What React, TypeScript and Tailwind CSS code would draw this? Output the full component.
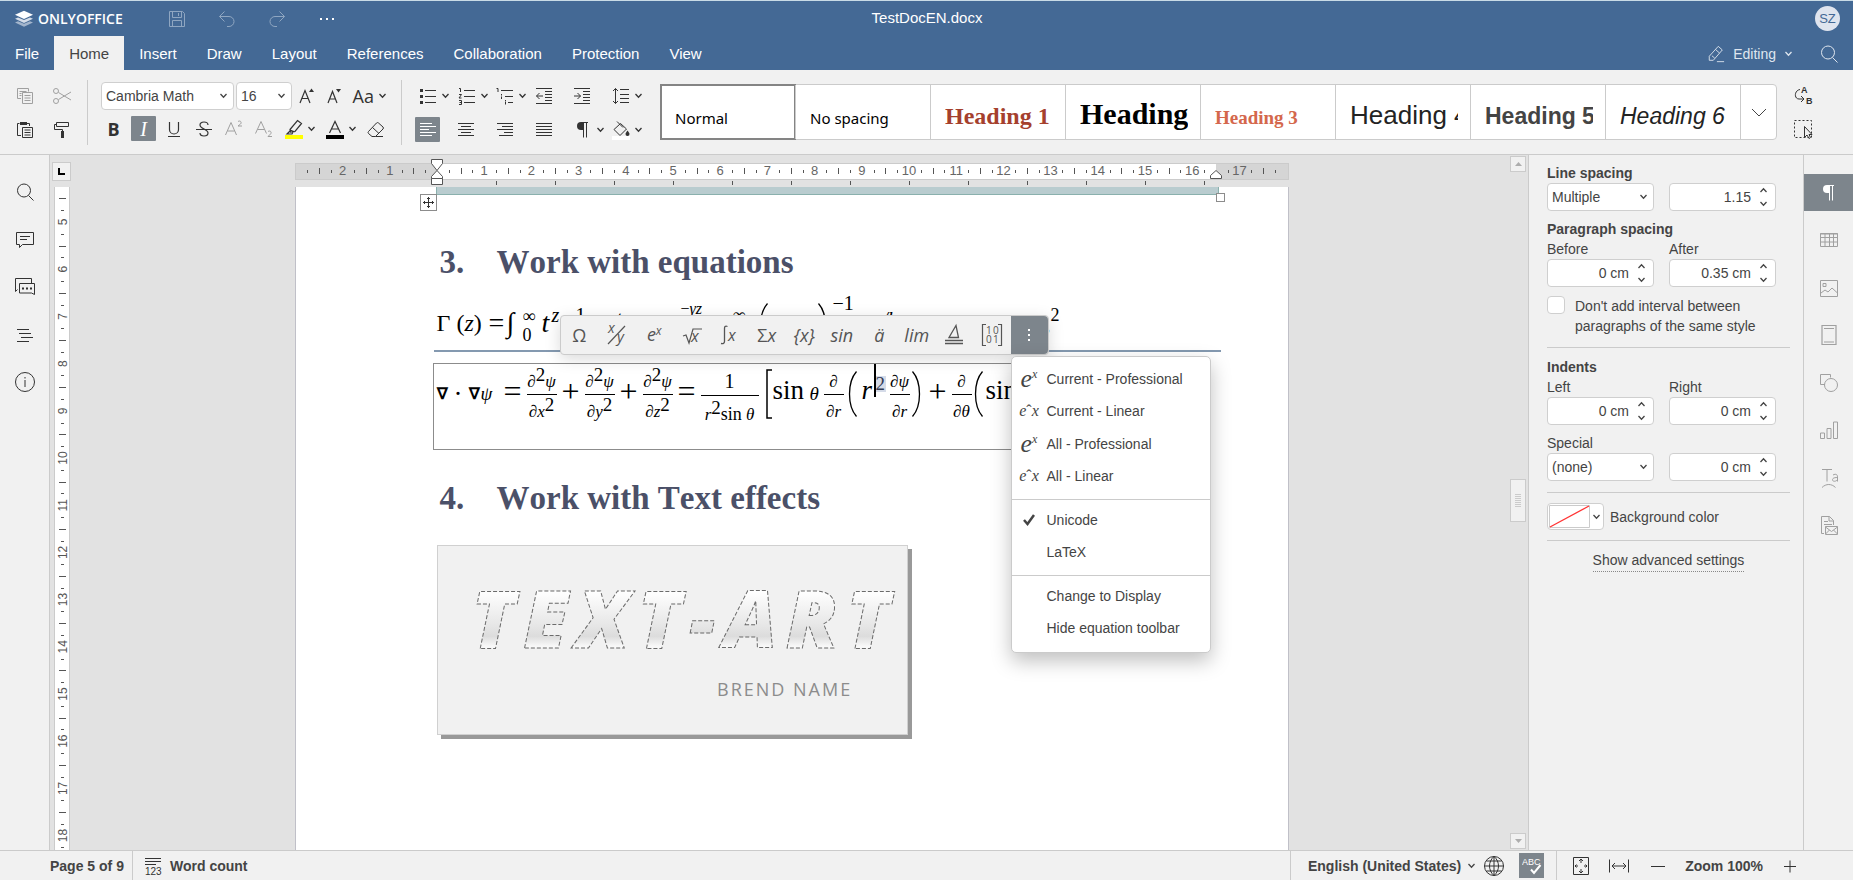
import React, { useState } from 'react';
import clsx from 'clsx';

type IconProps = { children: React.ReactNode; size?: number; className?: string };

const Icon = ({ children, size = 20, className }: IconProps) => (
  <svg width={size} height={size} viewBox="0 0 20 20" fill="none" stroke="currentColor" className={clsx('shrink-0', className)} aria-hidden="true">
    {children}
  </svg>
);

const Chevron = ({ className }: { className?: string }) => (
  <svg width="9" height="6" viewBox="0 0 9 6" fill="none" stroke="currentColor" strokeWidth="1.3" className={clsx('shrink-0', className)} aria-hidden="true">
    <path d="M1.5 1l3 3.2 3-3.2" />
  </svg>
);

/* ---------- icons ---------- */

const icons = {
  save: <path d="M2.5 2.5h13l2 2v13h-15zM5.5 2.5v6h9v-6M11.5 4v3M5.5 17.5v-6h9v6" />,
  undo: <path d="M7.5 2.5l-5 5 5 5M2.5 7.5H12a5 5 0 0 1 0 10h-2" />,
  redo: <path d="M12.5 2.5l5 5-5 5M17.5 7.5H8a5 5 0 0 0 0 10h2" />,
  copy: <path d="M6 12.5H2.5v-10h11v3M4.5 5.5h7M4.5 7.5h2M4.5 9.5h2M7.5 6.5h10v11h-10zM9.5 9.5h6M9.5 12h6M9.5 14.5h6" />,
  cut: <path d="M6.5 6.5L19 14M6.5 13.5L19 6M1.5 5a2.5 2.5 0 1 0 5 0 2.5 2.5 0 1 0-5 0M1.5 15a2.5 2.5 0 1 0 5 0 2.5 2.5 0 1 0-5 0" />,
  paste: (
    <>
      <path d="M6 15.5H2.5v-12h2M12 3.5h2.5V6M7.5 7.5h10v10h-10zM9.5 10h6M9.5 12.5h6M9.5 15h6" />
      <path d="M5 2h7v3H5z" fill="currentColor" stroke="none" />
    </>
  ),
  painter: (
    <>
      <path d="M4.5 2.5h12v4h-12zM4.5 4.5h-2v5h8v2" />
      <path d="M9 11h3v7H9z" fill="currentColor" stroke="none" />
    </>
  ),
  fontUp: (
    <>
      <path d="M3 17L8 4.5 13 17M5 12.5h6" strokeWidth="1.2" />
      <path d="M12 6l2.5-3.5L17 6z" fill="currentColor" stroke="none" />
    </>
  ),
  fontDown: (
    <>
      <path d="M4 17L8.5 5.5 13 17M5.5 13h6" strokeWidth="1.2" />
      <path d="M12 3l2.5 3.5L17 3z" fill="currentColor" stroke="none" />
    </>
  ),
  underline: <path d="M5.5 3v7.5a4.5 4.5 0 0 0 9 0V3M4 17.5h12" strokeWidth="1.2" />,
  strike: <path d="M14 6c0-2-1.8-3-4-3S6 4 6 6s2 3 4 4 4 2 4 4-1.8 3-4 3-4-1-4-3M2 10.5h16" strokeWidth="1.2" />,
  superscript: <path d="M1.5 16L7 3.5 12.5 16M3.5 12h7M14 2.5c2.5-1.5 4 1 2.5 2.5L14 7h4" />,
  subscript: <path d="M1.5 14.5L7 2.5l5.5 12M3.5 10.5h7M14 12.5c2.5-1.5 4 1 2.5 2.5L14 17.5h4" />,
  highlight: <path d="M13.5 1.5l4 3-6.5 8-4.5.5-.5-2.5zM6 11l5 2M6 12l-3 3h5l1-2" strokeWidth="1.2" />,
  fontColor: <path d="M4.5 14L10 2.5 15.5 14M6.5 10h7" strokeWidth="1.2" />,
  eraser: <path d="M2.5 12.5l8-8.5a1.5 1.5 0 0 1 2 0l4.5 4a1.5 1.5 0 0 1 0 2L9.5 17.5H6l-3.5-3a1.5 1.5 0 0 1 0-2zM6.5 8.5l6.5 6M9.5 17.5H17" />,
  bullets: (
    <>
      <path d="M7 4.5h11M7 10.5h11M7 16.5h11" />
      <path d="M2 3h3v3H2zM2 9h3v3H2zM2 15h3v3H2z" fill="currentColor" stroke="none" />
    </>
  ),
  numbers: <path d="M7 4.5h11M7 10.5h11M7 16.5h11M2 2.5h1.5V6M2 8.5h2.5L2 12h2.5M2 14.5h2.5v4H2M2.5 16.5h2" />,
  multi: <path d="M6 4.5h12M10 10.5h8M13 16.5h5M1.5 2.5H3V6M6.5 8v1.5M6.5 10.5V13M10.5 14v1.5M10.5 16v2.5" />,
  outdent: <path d="M2 2.5h16M11 5.5h7M11 8.5h7M11 11.5h7M11 14.5h7M2 17.5h16M2.5 10H9M5.5 7l-3 3 3 3" />,
  indent: <path d="M2 2.5h16M11 5.5h7M11 8.5h7M11 11.5h7M11 14.5h7M2 17.5h16M2 10h6.5M5.5 7l3 3-3 3" />,
  lineSpacing: <path d="M4.5 2.5v15M2 5l2.5-2.5L7 5M2 15l2.5 2.5L7 15M9 3.5h9M9 8.5h9M9 12.5h9M9 16.5h9" />,
  alignLeft: <path d="M2 3.5h12M2 6.5h16M2 9.5h9M2 12.5h16M2 15.5h12" />,
  alignCenter: <path d="M2 3.5h16M5 6.5h10M2 9.5h16M5 12.5h10M2 15.5h16" />,
  alignRight: <path d="M2 3.5h16M7 6.5h11M2 9.5h16M9 12.5h9M4 15.5h14" />,
  justify: <path d="M2 3.5h16M2 6.5h16M2 9.5h16M2 12.5h16M2 15.5h16" />,
  pilcrow: (
    <>
      <path d="M10.5 2.5v15M13.5 2.5v15M8 2.5h7" />
      <path d="M10.5 2H8a4 4 0 0 0 0 8h2.5z" fill="currentColor" stroke="none" />
    </>
  ),
  fill: (
    <>
      <path d="M3 9.5l6.5-6 6 5.5-6.5 6.5zM6 1.5l6 6" />
      <path d="M16.5 10.5c1 1.5 2 2.5 2 3.5a2 2 0 0 1-4 0c0-1 1-2 2-3.5z" fill="currentColor" stroke="none" />
    </>
  ),
  replace: (
    <>
      <path d="M7 4.5c-6 1-6 9.5-1 9.5h5M8 11l3 3-3 3" />
      <text x="8" y="8" fontSize="9" fontWeight="700" fontFamily="Liberation Sans, sans-serif" fill="currentColor" stroke="none">A</text>
      <text x="13" y="19" fontSize="9" fontWeight="700" fontFamily="Liberation Sans, sans-serif" fill="currentColor" stroke="none">B</text>
    </>
  ),
  selectAll: (
    <>
      <path d="M1.5 1.5h17v17h-17z" strokeDasharray="2 2" />
      <path d="M11.5 7.5v11l2.5-2.5 2 3.5 1.5-1-1.5-3h3z" fill="#f1f1f1" />
    </>
  ),
  pencil: <path d="M12.5 1.5l4.5 4-10 11.5H2.5v-4.5zM9.5 5l4.5 4M5.5 12l3 2.5M11 18.5h8" />,
  search: <path d="M2.5 8.5a6.5 6.5 0 1 0 13 0 6.5 6.5 0 1 0-13 0M13.5 13.5l5 5" />,
  comment: <path d="M1.5 3.5h17v12h-11l-3 3v-3h-3zM5 7.5h10M5 10.5h7" />,
  chat: (
    <>
      <path d="M16.5 6V1.5h-16v13l2-2M4.5 6.5h15v11l-3-1.5h-12z" />
      <path d="M7 10.5h2v2H7zM11 10.5h2v2h-2zM15 10.5h2v2h-2z" fill="currentColor" stroke="none" />
    </>
  ),
  headings: <path d="M2 4.5h12M4 8.5h12M6 12.5h12M2 16.5h12" />,
  info: <path d="M.5 10a9.5 9.5 0 1 0 19 0 9.5 9.5 0 1 0-19 0M10 8v7M10 5v1.5" />,
  table: <path d="M1 4h18M1.5 3.5h17v13h-17zM1.5 7.5h17M1.5 12h17M6 4v12.5M10.5 4v12.5M14.5 4v12.5" />,
  image: <path d="M1.5 2.5h17v16h-17zM4 5.5h3v3H4zM2 15l4-3 3 2 4-4 5.5 5" />,
  headerFooter: <path d="M3 .5h14v19H3zM5 3.5h10M5 17h10" strokeWidth="1.2" />,
  shapes: <path d="M6 11.5H1.5v-10h10v3M5.5 12a6.5 6.5 0 1 0 13 0 6.5 6.5 0 1 0-13 0" />,
  chart: <path d="M1.5 13h4v5.5h-4zM8 8.5h4v10H8zM14.5 2h4v16.5h-4z" />,
  textArt: <path d="M3 1.5h10M8 1.5v12M14 7c3-1.5 4.5-.5 4.5 2v4.5M18.5 9.5c-4 0-5 1-5 2.5s3.5 2 5-.5M3 19.5c4-4 9.5-4 13.5 0" />,
  mailMerge: <path d="M5 18.5H2.5v-17h8l4 4V10M10 1.5v4.5h4.5M5 6.5h4M5 9.5h8M6.5 11.5h12v8h-12zM6.5 12l6 4.5 6-4.5M6.5 19l4-4M18.5 19l-4-4" />,
  wordCount: (
    <>
      <path d="M2 2.5h16M2 5.5h16M2 8.5h11" />
      <text x="2" y="19" fontSize="10" fontWeight="400" fontFamily="Liberation Sans, sans-serif" fill="currentColor" stroke="none">123</text>
    </>
  ),
  globe: <path d="M.5 10a9.5 9.5 0 1 0 19 0 9.5 9.5 0 1 0-19 0M10 .5v19M.5 10h19M2.5 5h15M2.5 15h15M10 .5c-6 5-6 14 0 19M10 .5c6 5 6 14 0 19" />,
  spell: (
    <>
      <text x="0" y="9" fontSize="9" fontWeight="400" fontFamily="Liberation Sans, sans-serif" fill="currentColor" stroke="none">ABC</text>
      <path d="M9 13.5l3 3.5 6.5-8" strokeWidth="2" />
    </>
  ),
  fitPage: <path d="M2.5 1.5h15v17h-15zM10 3v4M8 5l2-2 2 2M10 13v4M8 15l2 2 2-2M4 10h3M5.5 8.5L4 10l1.5 1.5M13 10h3M14.5 8.5L16 10l-1.5 1.5" />,
  fitWidth: <path d="M.5 3.5v13M19.5 3.5v13M3 10h14M6 7l-3 3 3 3M14 7l3 3-3 3" />,
  minus: <path d="M3 10.5h14" />,
  plus: <path d="M4 10.5h12M10 4.5v12" />,
};

type IconName = keyof typeof icons;

/* ---------- toolbar parts ---------- */

const ToolButton = ({ icon, label, active, muted, children }: { icon?: IconName; label: string; active?: boolean; muted?: boolean; children?: React.ReactNode }) => (
  <button
    type="button"
    aria-label={label}
    aria-pressed={active}
    className={clsx(
      'flex h-[25px] w-[25px] shrink-0 items-center justify-center rounded-[1px]',
      active ? 'bg-[#7d858c] text-white' : muted ? 'text-[#a0a0a0]' : 'text-[#333]',
    )}
  >
    {icon && <Icon>{icons[icon]}</Icon>}
    {children}
  </button>
);

const SplitButton = ({ icon, label, swatch }: { icon: IconName; label: string; swatch?: string }) => (
  <button type="button" aria-label={label} className="flex h-[25px] w-[36px] shrink-0 items-center text-[#333]">
    <span className="flex w-[26px] flex-col items-center">
      <Icon>{icons[icon]}</Icon>
      {swatch && <span className={clsx('-mt-1 h-1 w-[18px]', swatch)} />}
    </span>
    <Chevron />
  </button>
);

const Separator = () => <div className="mx-[13px] mt-[10px] h-[65px] w-px shrink-0 bg-[#cbcbcb]" />;

const SelectBox = ({ label, value, className }: { label: string; value: string; className?: string }) => (
  <div className={clsx('relative shrink-0', className)}>
    <select aria-label={label} defaultValue={value} className="h-7 w-full appearance-none rounded-sm border border-[#cfcfcf] bg-white pl-1 text-sm text-[#444]">
      <option>{value}</option>
    </select>
    <Chevron className="pointer-events-none absolute top-[11px] right-[6px]" />
  </div>
);

const tabs = ['File', 'Home', 'Insert', 'Draw', 'Layout', 'References', 'Collaboration', 'Protection', 'View'];

const styles = [
  { name: 'Normal', cls: 'font-["Noto_Sans"] text-[15px] text-black' },
  { name: 'No spacing', cls: 'font-["Noto_Sans"] text-[15px] text-black' },
  { name: 'Heading 1', cls: 'font-["Liberation_Serif"] text-2xl font-bold text-[#a5402d]' },
  { name: 'Heading 2', cls: 'font-["Liberation_Serif"] text-[30px] font-bold text-black' },
  { name: 'Heading 3', cls: 'font-["Liberation_Serif"] text-[19px] font-bold text-[#d4674c]' },
  { name: 'Heading 4', cls: 'text-[26px] text-[#232323]' },
  { name: 'Heading 5', cls: 'text-[23px] font-bold text-[#444]' },
  { name: 'Heading 6', cls: 'text-[23px] italic text-[#232323]' },
];

const Header = () => {
  const [activeTab, setActiveTab] = useState('Home');
  return (
    <header className="border-t border-[#c9dbe6] bg-[#446995] text-white">
      <div className="grid h-[35px] grid-cols-[1fr_auto_1fr] items-center pr-[13px] pl-[14px]">
        <div className="flex items-center">
          <svg width="20" height="18" viewBox="0 0 20 18" aria-hidden="true">
            <path d="M1 12.5l3-1.3 6 2.6 6-2.6 3 1.3-9 4.3z" fill="#a3b5cc" />
            <path d="M1 8.7l3-1.3 6 2.7 6-2.7 3 1.3L10 13z" fill="#d5dde8" />
            <path d="M1 4.8L10 .7l9 4.1L10 9z" fill="#fff" />
          </svg>
          <span className="ml-1 font-['Open_Sans'] text-sm font-semibold">ONLYOFFICE</span>
          <div className="ml-11 flex gap-[30px] text-[#8fa6c1]">
            <button type="button" aria-label="Save"><Icon>{icons.save}</Icon></button>
            <button type="button" aria-label="Undo"><Icon>{icons.undo}</Icon></button>
            <button type="button" aria-label="Redo"><Icon>{icons.redo}</Icon></button>
            <button type="button" aria-label="More" className="ml-[3px] text-white">
              <svg width="14" height="4" viewBox="0 0 14 4" fill="currentColor"><path d="M0 1h2v2H0zM6 1h2v2H6zM12 1h2v2h-2z" /></svg>
            </button>
          </div>
        </div>
        <h1 className="text-[15px]">TestDocEN.docx</h1>
        <div className="flex justify-end">
          <span className="flex h-[25px] w-[25px] items-center justify-center rounded-full bg-[#dfe4ee] text-[13px] text-[#446995]">SZ</span>
        </div>
      </div>
      <div className="flex h-[34px] items-center justify-between pr-[14px]">
        <nav className="flex h-full">
          {tabs.map(tab => (
            <button
              key={tab}
              type="button"
              onClick={() => setActiveTab(tab)}
              className={clsx('h-full px-[15px] pt-[2px] text-[15px]', activeTab === tab && 'bg-[#f1f1f1] text-[#444]')}
            >
              {tab}
            </button>
          ))}
        </nav>
        <div className="flex items-center pt-px text-[#dfe6ef]">
          <button type="button" className="flex items-center gap-2 text-sm">
            <Icon size={18}>{icons.pencil}</Icon>
            Editing
            <Chevron />
          </button>
          <button type="button" aria-label="Search" className="ml-[26px]"><Icon>{icons.search}</Icon></button>
        </div>
      </div>
    </header>
  );
};

const Toolbar = () => (
  <div className="flex h-[85px] border-b border-[#cbcbcb] bg-[#f1f1f1] pl-3">
    <div className="grid grid-cols-2 content-start gap-x-3 gap-y-[9px] pt-[13px]">
      <ToolButton icon="copy" label="Copy" muted />
      <ToolButton icon="cut" label="Cut" muted />
      <ToolButton icon="paste" label="Paste" />
      <ToolButton icon="painter" label="Copy style" />
    </div>
    <Separator />
    <div className="flex flex-col gap-[6px] pt-3">
      <div className="flex h-7 items-center gap-[2px]">
        <SelectBox label="Font" value="Cambria Math" className="w-[133px]" />
        <SelectBox label="Font size" value="16" className="w-[56px]" />
        <ToolButton icon="fontUp" label="Increment font size" />
        <ToolButton icon="fontDown" label="Decrement font size" />
        <button type="button" aria-label="Change case" className="flex w-[39px] items-center justify-end gap-1 text-[#333]">
          <span className="font-['Open_Sans'] text-lg leading-none">Aa</span>
          <Chevron />
        </button>
      </div>
      <div className="flex gap-[5px]">
        <ToolButton label="Bold"><span className="font-['Open_Sans'] text-lg leading-none font-bold">B</span></ToolButton>
        <ToolButton label="Italic" active><span className="font-['Liberation_Serif'] text-xl leading-none italic">I</span></ToolButton>
        <ToolButton icon="underline" label="Underline" />
        <ToolButton icon="strike" label="Strikeout" />
        <ToolButton icon="superscript" label="Superscript" muted />
        <ToolButton icon="subscript" label="Subscript" muted />
        <SplitButton icon="highlight" label="Highlight color" swatch="bg-[#ff0]" />
        <SplitButton icon="fontColor" label="Font color" swatch="bg-black" />
        <ToolButton icon="eraser" label="Clear style" />
      </div>
    </div>
    <Separator />
    <div className="grid w-[232px] shrink-0 grid-cols-6 content-start gap-y-[9px] pt-[13px]">
      <SplitButton icon="bullets" label="Bullets" />
      <SplitButton icon="numbers" label="Numbering" />
      <SplitButton icon="multi" label="Multilevel list" />
      <ToolButton icon="outdent" label="Decrease indent" />
      <ToolButton icon="indent" label="Increase indent" />
      <SplitButton icon="lineSpacing" label="Line spacing" />
      <ToolButton icon="alignLeft" label="Align left" active />
      <ToolButton icon="alignCenter" label="Align center" />
      <ToolButton icon="alignRight" label="Align right" />
      <ToolButton icon="justify" label="Justify" />
      <SplitButton icon="pilcrow" label="Nonprinting characters" />
      <SplitButton icon="fill" label="Shading" swatch="bg-white" />
    </div>
    <div className="mt-[14px] ml-[13px] flex h-14 min-w-0 flex-1 rounded-sm border border-[#cbcbcb] bg-white">
      {styles.map((style, i) => (
        <button
          key={style.name}
          type="button"
          className={clsx(
            'flex min-w-0 flex-1 pr-3 pl-[14px] text-left',
            i === 0 ? 'outline-2 -outline-offset-1 outline-[#848484]' : 'border-l border-[#cbcbcb]',
          )}
        >
          <span className={clsx('h-full w-full overflow-hidden leading-none whitespace-nowrap before:inline-block before:h-[39px]', style.cls)}>{style.name}</span>
        </button>
      ))}
      <button type="button" aria-label="More styles" className="flex w-[36px] items-center justify-center border-l border-[#cbcbcb]">
        <svg width="16" height="9" viewBox="0 0 16 9" fill="none" stroke="#444"><path d="M1 1l7 7 7-7" /></svg>
      </button>
    </div>
    <div className="mr-[38px] ml-[13px] flex flex-col gap-[9px] pt-3">
      <ToolButton icon="replace" label="Replace" />
      <ToolButton icon="selectAll" label="Select" />
    </div>
  </div>
);

/* ---------- rulers ---------- */

const CM = 47.2;

const HorizontalRuler = () => {
  const marks = [];
  for (let q = -11; q <= 71; q++) {
    const x = 142 + (q * CM) / 4;
    const cm = Math.abs(q / 4);
    if (q === 0 || q === 66) continue;
    if (q % 4 === 0) {
      marks.push(<text key={q} x={x} y="12" textAnchor="middle" fontSize="13" fontFamily="Liberation Sans, sans-serif" fill="#666">{cm}</text>);
    } else {
      const h = q % 2 === 0 ? 6 : 3;
      marks.push(<rect key={q} x={Math.round(x)} y={8 - Math.floor(h / 2)} width="1" height={h} fill="#555" />);
    }
  }
  const tabStops = Array.from({ length: 13 }, (_, i) => Math.round(142 + 59 * (i + 1)));
  return (
    <svg width="993" height="32" className="block overflow-visible" aria-hidden="true">
      <g transform="translate(0 8)">
        <rect x=".5" y=".5" width="993" height="16" fill="#d5d5d5" stroke="#cbcbcb" />
        <rect x="142" y="1" width="779" height="15" fill="#fff" />
        {marks}
        {tabStops.map(x => <rect key={x} x={x} y="18" width="1" height="4" fill="#555" />)}
        <g fill="#fff" stroke="#555">
          <path d="M136.5 -3.5h11v4l-5.5 7-5.5-7z" />
          <path d="M142 7.5l5.5 6v2h-11v-2z" />
          <path d="M136.5 15.5h11v6h-11z" />
          <path d="M921 7.5l5.5 5v3h-11v-3z" />
        </g>
      </g>
    </svg>
  );
};

const VerticalRuler = () => {
  const marks = [];
  for (let q = 18; q <= 73; q++) {
    const y = 35 + ((q - 20) * CM) / 4;
    if (q % 4 === 0) {
      marks.push(
        <text key={q} x="0" y="0" transform={`translate(12 ${y}) rotate(-90)`} textAnchor="middle" fontSize="12" fontFamily="Liberation Sans, sans-serif" fill="#555">{q / 4}</text>,
      );
    } else {
      const w = q % 2 === 0 ? 7 : 3;
      marks.push(<rect key={q} x={7 - Math.floor(w / 2)} y={Math.round(y)} width={w} height="1" fill="#555" />);
    }
  }
  return (
    <svg width="16" height="663" className="block" aria-hidden="true">{marks}</svg>
  );
};

/* ---------- equations ---------- */

const Frac = ({ top, bottom, className }: { top: React.ReactNode; bottom: React.ReactNode; className?: string }) => (
  <span className={clsx('flex shrink-0 flex-col items-center text-[17px]', className)}>
    <span className="pt-[6px] leading-6 whitespace-nowrap">{top}</span>
    <span className="h-px w-full bg-black" />
    <span className="pt-1 leading-[26px] whitespace-nowrap">{bottom}</span>
  </span>
);

const Sup = ({ children }: { children: React.ReactNode }) => <span className="relative -top-[6px] text-[19px] leading-none not-italic">{children}</span>;

const Paren = ({ right, className }: { right?: boolean; className?: string }) => (
  <span className={clsx('flex shrink-0 justify-center', className)}>
    <svg width="9" height="46" viewBox="0 0 9 46" fill="none" stroke="#000" strokeWidth="1.3" aria-hidden="true">
      <path d={right ? 'M.5 .5q7 8 7 22.5t-7 22.5' : 'M8.5 .5q-7 8-7 22.5t7 22.5'} />
    </svg>
  </span>
);

const Operator = ({ children }: { children: React.ReactNode }) => (
  <span className="w-7 shrink-0 pb-[6px] text-center text-[32px]">{children}</span>
);

const secondDerivative = (axis: string) => (
  <Frac className="w-[30px]" top={<><i>∂</i><Sup>2</Sup><i>ψ</i></>} bottom={<><i>∂{axis}</i><Sup>2</Sup></>} />
);

// one line of the gamma function, most of it runs under the floating toolbar
const GammaEquation = () => (
  <div className="flex h-[70px] items-end border-b-2 border-[#8499b0] pb-[13px] pl-[3px] font-['Liberation_Serif'] text-2xl leading-7 whitespace-nowrap text-black">
    <span className="w-[52px]">Γ (<i>z</i>)</span>
    <span className="w-[18px] text-[28px]">=</span>
    <span className="w-[16px] text-[28px]">∫</span>
    <span className="-mb-2 flex w-[19px] flex-col text-lg leading-[19px]"><span>∞</span><span>0</span></span>
    <i className="w-[10px] text-[28px]">t</i>
    <span className="w-[64px] pb-2 text-xl"><i>z</i> −1</span>
    <span className="w-[56px] pb-1"><i>t</i></span>
    <span className="w-[9px] pb-1"><i>e</i></span>
    <span className="w-[34px] pb-4 text-base">−<i>γz</i></span>
    <span className="w-[18px] pb-1">=</span>
    <span className="w-[19px] pb-2 text-lg">∞</span>
    <span className="flex w-[16px] translate-y-3 justify-end"><Paren /></span>
    <span className="w-[50px] pb-1 text-right"><i>z</i></span>
    <span className="flex w-[15px] translate-y-3"><Paren right /></span>
    <span className="w-[42px] pb-5 text-xl">−1</span>
    <i className="w-[168px] pb-1 text-xl">z/k</i>
    <span className="w-[8px] text-right">,</span>
    <span className="pb-2 text-lg">2</span>
  </div>
);

const LaplaceEquation = () => (
  <div className="mt-[11px] -ml-px h-[87px] w-[640px] overflow-hidden border border-[#8c8c8c] font-['Liberation_Serif'] text-[27px] leading-[30px] text-black">
    <div className="flex h-[60px] items-center pl-[3px]">
      <span className="w-[11px] shrink-0 text-base font-bold">∇</span>
      <span className="w-[21px] shrink-0 text-center">·</span>
      <span className="w-[12px] shrink-0 text-base font-bold">∇</span>
      <i className="w-[18px] shrink-0 text-[19px]">ψ</i>
      <Operator>=</Operator>
      {secondDerivative('x')}
      <Operator>+</Operator>
      {secondDerivative('y')}
      <Operator>+</Operator>
      {secondDerivative('z')}
      <Operator>=</Operator>
      <Frac className="w-[58px]" top={<span className="text-xl">1</span>} bottom={<><i>r</i><Sup>2</Sup><span className="text-lg">sin</span> <i>θ</i></>} />
      <svg width="14" height="50" viewBox="0 0 14 50" fill="none" stroke="#000" strokeWidth="1.5" className="shrink-0" aria-hidden="true"><path d="M13 1H8v48h5" /></svg>
      <span className="w-[37px] shrink-0 pb-2">sin</span>
      <i className="w-[14px] shrink-0 text-[19px]">θ</i>
      <Frac className="w-[20px]" top={<i>∂</i>} bottom={<i>∂r</i>} />
      <Paren className="w-[18px]" />
      <i className="w-[12px] shrink-0 pb-2">r</i>
      <span className="flex h-[33px] shrink-0 items-center self-start border-l-2 border-black pr-1 text-[19px]">
        <span className="mt-[6px] w-[10px] bg-[#d5dbe8] leading-4 text-[#333b55]">2</span>
      </span>
      <Frac className="w-[20px]" top={<i>∂ψ</i>} bottom={<i>∂r</i>} />
      <Paren right className="w-[14px]" />
      <Operator>+</Operator>
      <Frac className="w-[20px]" top={<i>∂</i>} bottom={<i>∂θ</i>} />
      <Paren className="w-[14px]" />
      <span className="shrink-0 pb-2">sin</span>
    </div>
  </div>
);

/* ---------- overlays ---------- */

const eqText = { fill: '#555', fontFamily: 'Open Sans, sans-serif', fontStyle: 'italic' };

const equationTools = [
  { label: 'Symbols', node: <span className="not-italic">Ω</span> },
  {
    label: 'Fraction',
    node: (
      <svg width="22" height="24" viewBox="0 0 22 24" {...eqText}>
        <text x="2" y="10" fontSize="14">x</text>
        <text x="11" y="19" fontSize="15">y</text>
        <path d="M2 21L19 3" stroke="#555" fill="none" strokeWidth="1.2" />
      </svg>
    ),
  },
  { label: 'Script', node: <span>e<span className="relative -top-[6px] text-xs">x</span></span> },
  {
    label: 'Radical',
    node: (
      <svg width="20" height="24" viewBox="0 0 20 24" {...eqText}>
        <text x="9" y="19" fontSize="16">x</text>
        <path d="M1 13l3-1 3 8 4-14h9" stroke="#555" fill="none" strokeWidth="1.2" />
      </svg>
    ),
  },
  {
    label: 'Integral',
    node: (
      <svg width="18" height="24" viewBox="0 0 18 24" {...eqText}>
        <text x="8" y="18" fontSize="16">x</text>
        <path d="M7.5 3.5c-2.5-1-3 .5-3 2v13c0 2-1.5 2.5-3.5 2" stroke="#555" fill="none" strokeWidth="1.3" />
      </svg>
    ),
  },
  { label: 'Large operator', node: <span><span className="not-italic">Σ</span>x</span> },
  { label: 'Bracket', node: <span>{'{x}'}</span> },
  { label: 'Function', node: <span>sin</span> },
  { label: 'Accent', node: <span>ä</span> },
  { label: 'Limit', node: <span>lim</span> },
  {
    label: 'Operator',
    node: (
      <svg width="20" height="24" viewBox="0 0 20 24" fill="none" stroke="#555" strokeWidth="1.3">
        <path d="M5 14.5L12 2.5l2.5 12zM1 17.5h18M1 20.5h18" />
      </svg>
    ),
  },
  {
    label: 'Matrix',
    node: (
      <svg width="22" height="24" viewBox="0 0 22 24" fill="none" stroke="#555">
        <path d="M5 1.5H1.5v21H5M17 1.5h3.5v21H17" strokeWidth="1.2" />
        <g fill="#555" stroke="none" fontFamily="Open Sans, sans-serif" fontSize="10" fontStyle="normal">
          <text x="5" y="11">1</text><text x="12" y="11">0</text>
          <text x="5" y="20">0</text><text x="12" y="20">1</text>
        </g>
      </svg>
    ),
  },
];

const EquationToolbar = () => (
  <div className="absolute top-[128px] left-[264px] flex h-10 w-[489px] rounded border border-[#cbcbcb] bg-[#f1f1f1] font-['Open_Sans'] text-lg text-[#555] italic shadow-[0_4px_16px_rgba(0,0,0,0.15)]">
    {equationTools.map(tool => (
      <button key={tool.label} type="button" aria-label={tool.label} className="flex flex-1 basis-0 items-center justify-center leading-none">
        {tool.node}
      </button>
    ))}
    <button type="button" aria-label="Equation settings" aria-pressed="true" className="flex w-[37px] items-center justify-center rounded-r bg-[#7d858c]">
      <svg width="4" height="14" viewBox="0 0 4 14" fill="#fff"><path d="M1 1h2v2H1zM1 6h2v2H1zM1 11h2v2H1z" /></svg>
    </button>
  </div>
);

const professionalIcon = <span className="text-[26px]">e<span className="relative -top-[9px] text-xs">x</span></span>;
const linearIcon = <span className="text-base">e<span className="not-italic">ˆ</span>x</span>;

const MenuItem = ({ icon, children }: { icon?: React.ReactNode; children: React.ReactNode }) => (
  <button type="button" role="menuitem" className="flex h-8 w-full items-center text-left text-sm text-[#444]">
    <span className="flex w-[35px] justify-center pr-1 pl-1 font-['Liberation_Serif'] leading-none whitespace-nowrap italic">{icon}</span>
    {children}
  </button>
);

const EquationMenu = () => (
  <div role="menu" className="absolute top-[169px] left-[715px] w-[200px] divide-y divide-[#cbcbcb] rounded-[5px] border border-[#cbcbcb] bg-white pb-px shadow-[0_8px_20px_rgba(0,0,0,0.25)]">
    <div className="grid h-[143px] grid-rows-4 pt-[6px] pb-[7px]">
      <MenuItem icon={professionalIcon}>Current - Professional</MenuItem>
      <MenuItem icon={linearIcon}>Current - Linear</MenuItem>
      <MenuItem icon={professionalIcon}>All - Professional</MenuItem>
      <MenuItem icon={linearIcon}>All - Linear</MenuItem>
    </div>
    <div className="pt-1 pb-[7px]">
      <MenuItem
        icon={<svg width="12" height="12" viewBox="0 0 12 12" fill="none" stroke="#444" strokeWidth="2.5"><path d="M1 6l3.5 4L11 1" /></svg>}
      >
        Unicode
      </MenuItem>
      <MenuItem>LaTeX</MenuItem>
    </div>
    <div className="pt-1 pb-[7px]">
      <MenuItem>Change to Display</MenuItem>
      <MenuItem>Hide equation toolbar</MenuItem>
    </div>
  </div>
);

/* ---------- document ---------- */

const Heading = ({ number, children }: { number: string; children: React.ReactNode }) => (
  <h2 className="flex pl-[6px] font-['Liberation_Serif'] text-[33px] leading-10 font-bold text-[#4b5068] [font-kerning:none]">
    <span className="w-[57px]">{number}</span>
    {children}
  </h2>
);

const TextArt = () => (
  <div className="mt-[27px] ml-[3px] h-[190px] w-[471px] border border-[#d0d0d0] bg-[#f1f1f1] shadow-[4px_4px_0_#999]">
    <svg width="469" height="188" aria-label="TEXT-ART BREND NAME">
      <defs>
        <linearGradient id="art" gradientUnits="userSpaceOnUse" x1="0" y1="45" x2="0" y2="103">
          <stop offset="0" stopColor="#fff" />
          <stop offset=".6" stopColor="#e6e6e6" />
          <stop offset=".78" stopColor="#dcdcdc" />
          <stop offset=".95" stopColor="#f8f8f8" />
        </linearGradient>
      </defs>
      <text x="33" y="102" fontSize="80" fontFamily="Open Sans, sans-serif" fontWeight="800" fontStyle="italic" fill="url(#art)" stroke="#6b6b6b" strokeDasharray="4 2" className="tracking-[8px]">TEXT-ART</text>
      <text x="279" y="150" fontSize="18" fontFamily="Open Sans, sans-serif" fill="#8c8c8c" className="tracking-[2px]">BREND NAME</text>
    </svg>
  </div>
);

const Page = () => (
  <article className="relative min-h-0 flex-1 border-x border-[#c0c0c8] bg-white pl-[138px]">
    <div className="ml-[2px] h-2 w-[783px] border-x border-b border-[#8ab0ad] bg-[#b9cccf]" />
    <div className="absolute top-[7px] left-[124px] flex h-[17px] w-[17px] items-center justify-center border border-[#8c8c8c] bg-white">
      <svg width="11" height="11" viewBox="0 0 11 11" fill="none" stroke="#333"><path d="M5.5 0v11M0 5.5h11M4 1.5h3M4 9.5h3M1.5 4v3M9.5 4v3" /></svg>
    </div>
    <div className="absolute top-[6px] left-[920px] h-[9px] w-[9px] border border-[#8c8c8c] bg-white" />
    <div className="mr-[67px] pt-[47px]">
      <Heading number="3.">Work with equations</Heading>
      <GammaEquation />
      <LaplaceEquation />
      <div className="h-7" />
      <Heading number="4.">Work with Text effects</Heading>
      <TextArt />
    </div>
    <EquationToolbar />
    <EquationMenu />
  </article>
);

const ScrollArrow = ({ down }: { down?: boolean }) => (
  <button type="button" aria-label={down ? 'Scroll down' : 'Scroll up'} className="flex h-4 w-4 items-center justify-center border border-[#cbcbcb] bg-[#f1f1f1]">
    <svg width="7" height="4" viewBox="0 0 7 4" fill="#adadad"><path d={down ? 'M0 0h7L3.5 4z' : 'M0 4h7L3.5 0z'} /></svg>
  </button>
);

const Editor = () => (
  <main className="flex min-w-0 flex-1 overflow-hidden bg-[#e2e2e2]">
    <div className="flex w-[23px] shrink-0 flex-col pt-[7px] pl-[2px]">
      <button type="button" aria-label="Tab stop" className="flex h-[19px] w-[19px] items-center justify-center border border-[#cbcbcb] bg-[#f1f1f1]">
        <svg width="7" height="7" viewBox="0 0 7 7" fill="none" stroke="#000" strokeWidth="2"><path d="M1 0v6h6" /></svg>
      </button>
      <div className="mt-[6px] ml-[2px] min-h-0 w-4 flex-1 overflow-hidden border-x border-[#cbcbcb] bg-white">
        <VerticalRuler />
      </div>
    </div>
    <div className="flex min-w-0 flex-1 justify-center overflow-hidden">
      <div className="flex w-[994px] shrink-0 flex-col">
        <HorizontalRuler />
        <Page />
      </div>
    </div>
    <div className="flex w-[18px] shrink-0 flex-col items-start justify-between py-px">
      <ScrollArrow />
      <div className="mt-[307px] mb-auto flex h-[43px] w-4 flex-col items-center justify-center gap-px border border-[#cbcbcb] bg-[#f1f1f1]">
        {[0, 1, 2, 3, 4, 5, 6].map(line => <span key={line} className="h-px w-[6px] bg-[#cbcbcb]" />)}
      </div>
      <ScrollArrow down />
    </div>
  </main>
);

/* ---------- side panels ---------- */

const leftItems: { icon: IconName; label: string }[] = [
  { icon: 'search', label: 'Find' },
  { icon: 'comment', label: 'Comments' },
  { icon: 'chat', label: 'Chat' },
  { icon: 'headings', label: 'Headings' },
  { icon: 'info', label: 'About' },
];

const rightItems: { icon: IconName; label: string }[] = [
  { icon: 'pilcrow', label: 'Paragraph settings' },
  { icon: 'table', label: 'Table settings' },
  { icon: 'image', label: 'Image settings' },
  { icon: 'headerFooter', label: 'Header and footer settings' },
  { icon: 'shapes', label: 'Shape settings' },
  { icon: 'chart', label: 'Chart settings' },
  { icon: 'textArt', label: 'Text Art settings' },
  { icon: 'mailMerge', label: 'Mail merge settings' },
];

const LeftBar = () => (
  <aside className="w-[50px] shrink-0 border-r border-[#cbcbcb] bg-[#f1f1f1] pt-[13px]">
    <div className="grid h-[238px] grid-rows-5">
      {leftItems.map(item => (
        <button key={item.label} type="button" aria-label={item.label} className="flex items-center justify-center text-[#333]">
          <Icon>{icons[item.icon]}</Icon>
        </button>
      ))}
    </div>
  </aside>
);

const RightBar = () => (
  <aside className="w-[50px] shrink-0 border-l border-[#cbcbcb] bg-[#f1f1f1] pt-[14px]">
    <div className="grid h-[380px] grid-rows-8">
      {rightItems.map((item, i) => (
        <button key={item.label} type="button" aria-label={item.label} className="flex items-center">
          <span className={clsx('flex h-[37px] w-full items-center justify-center', i === 0 ? 'bg-[#7d858c] text-white' : 'text-[#a0a0a0]')}>
            <Icon>{icons[item.icon]}</Icon>
          </span>
        </button>
      ))}
    </div>
  </aside>
);

const Spinner = ({ id, label, value }: { id: string; label?: string; value: string }) => (
  <div className="flex h-7 w-[107px] rounded-sm border border-[#cfcfcf] bg-white">
    <input id={id} aria-label={label} defaultValue={value} className="min-w-0 flex-1 text-right text-sm text-[#444] outline-none" />
    <div className="flex w-[24px] flex-col items-center justify-center gap-2">
      <button type="button" aria-label="Increase"><Chevron className="rotate-180" /></button>
      <button type="button" aria-label="Decrease"><Chevron /></button>
    </div>
  </div>
);

const Field = ({ id, label, value }: { id: string; label: string; value: string }) => (
  <div>
    <label htmlFor={id} className="block leading-5">{label}</label>
    <Spinner id={id} value={value} />
  </div>
);

const SettingsPanel = () => (
  <aside className="w-[275px] shrink-0 border-l border-[#cbcbcb] bg-[#f1f1f1] pt-2 pr-[13px] pl-[18px] text-sm text-[#444]">
    <h3 className="leading-5 font-bold">Line spacing</h3>
    <div className="flex gap-[15px]">
      <SelectBox label="Line spacing" value="Multiple" className="w-[107px]" />
      <Spinner id="line-spacing-at" label="Line spacing value" value="1.15" />
    </div>
    <h3 className="mt-2 leading-5 font-bold">Paragraph spacing</h3>
    <div className="flex gap-[15px]">
      <Field id="before" label="Before" value="0 cm" />
      <Field id="after" label="After" value="0.35 cm" />
    </div>
    <label className="mt-[9px] flex leading-5">
      <input type="checkbox" className="mr-[10px] h-[18px] w-[18px] shrink-0 appearance-none rounded-sm border border-[#cfcfcf] bg-white" />
      <span>Don't add interval between<br />paragraphs of the same style</span>
    </label>
    <hr className="mt-[11px] border-[#cbcbcb]" />
    <h3 className="mt-[9px] leading-5 font-bold">Indents</h3>
    <div className="flex gap-[15px]">
      <Field id="left" label="Left" value="0 cm" />
      <Field id="right" label="Right" value="0 cm" />
    </div>
    <div className="mt-2 leading-5">Special</div>
    <div className="flex gap-[15px]">
      <SelectBox label="Special" value="(none)" className="w-[107px]" />
      <Spinner id="special-by" label="Special indent" value="0 cm" />
    </div>
    <hr className="mt-[11px] border-[#cbcbcb]" />
    <div className="mt-[10px] flex items-center gap-[6px]">
      <button type="button" id="bg-color" aria-label="Background color" className="flex h-[27px] w-[57px] items-center gap-[2px] rounded-sm border border-[#cfcfcf] bg-white pl-px">
        <svg width="41" height="23" viewBox="0 0 41 23" fill="none"><path d="M.5 .5h40v22H.5z" stroke="#cbcbcb" /><path d="M1 22L40 1" stroke="#f33" strokeWidth="1.3" /></svg>
        <Chevron />
      </button>
      <label htmlFor="bg-color">Background color</label>
    </div>
    <hr className="mt-[10px] border-[#cbcbcb]" />
    <div className="mt-2 text-center">
      <a href="#advanced" className="inline-block border-b border-dotted border-[#888] leading-[22px]">Show advanced settings</a>
    </div>
  </aside>
);

const StatusBar = () => (
  <footer className="flex h-[30px] shrink-0 items-center border-t border-[#cbcbcb] bg-[#f1f1f1] text-sm font-bold text-[#444]">
    <span className="ml-[50px] w-[82px]">Page 5 of 9</span>
    <button type="button" className="flex h-full items-center gap-[7px] border-l border-[#cbcbcb] pl-[10px]">
      <Icon className="text-[#333]">{icons.wordCount}</Icon>
      Word count
    </button>
    <div className="ml-auto flex h-full items-center border-l border-[#cbcbcb] pl-[17px]">
      <button type="button" className="flex items-center gap-[6px]">English (United States)<Chevron /></button>
      <button type="button" aria-label="Document language" className="ml-2 text-[#333]"><Icon>{icons.globe}</Icon></button>
      <button type="button" aria-label="Spell checking" aria-pressed="true" className="ml-[15px] flex h-[25px] w-[25px] items-center justify-center bg-[#7d858c] text-white"><Icon>{icons.spell}</Icon></button>
    </div>
    <div className="mr-[53px] ml-3 flex h-full items-center border-l border-[#cbcbcb] pl-[14px] text-[#333]">
      <button type="button" aria-label="Fit to page"><Icon>{icons.fitPage}</Icon></button>
      <button type="button" aria-label="Fit to width" className="ml-[18px]"><Icon>{icons.fitWidth}</Icon></button>
      <button type="button" aria-label="Zoom out" className="ml-[19px]"><Icon>{icons.minus}</Icon></button>
      <span className="mx-[17px] text-[#444]">Zoom 100%</span>
      <button type="button" aria-label="Zoom in"><Icon>{icons.plus}</Icon></button>
    </div>
  </footer>
);

export default function App() {
  return (
    <div className="flex h-screen flex-col overflow-hidden bg-[#f1f1f1] font-['Liberation_Sans',sans-serif] text-[#444]">
      <Header />
      <Toolbar />
      <div className="flex min-h-0 flex-1">
        <LeftBar />
        <Editor />
        <SettingsPanel />
        <RightBar />
      </div>
      <StatusBar />
    </div>
  );
}
